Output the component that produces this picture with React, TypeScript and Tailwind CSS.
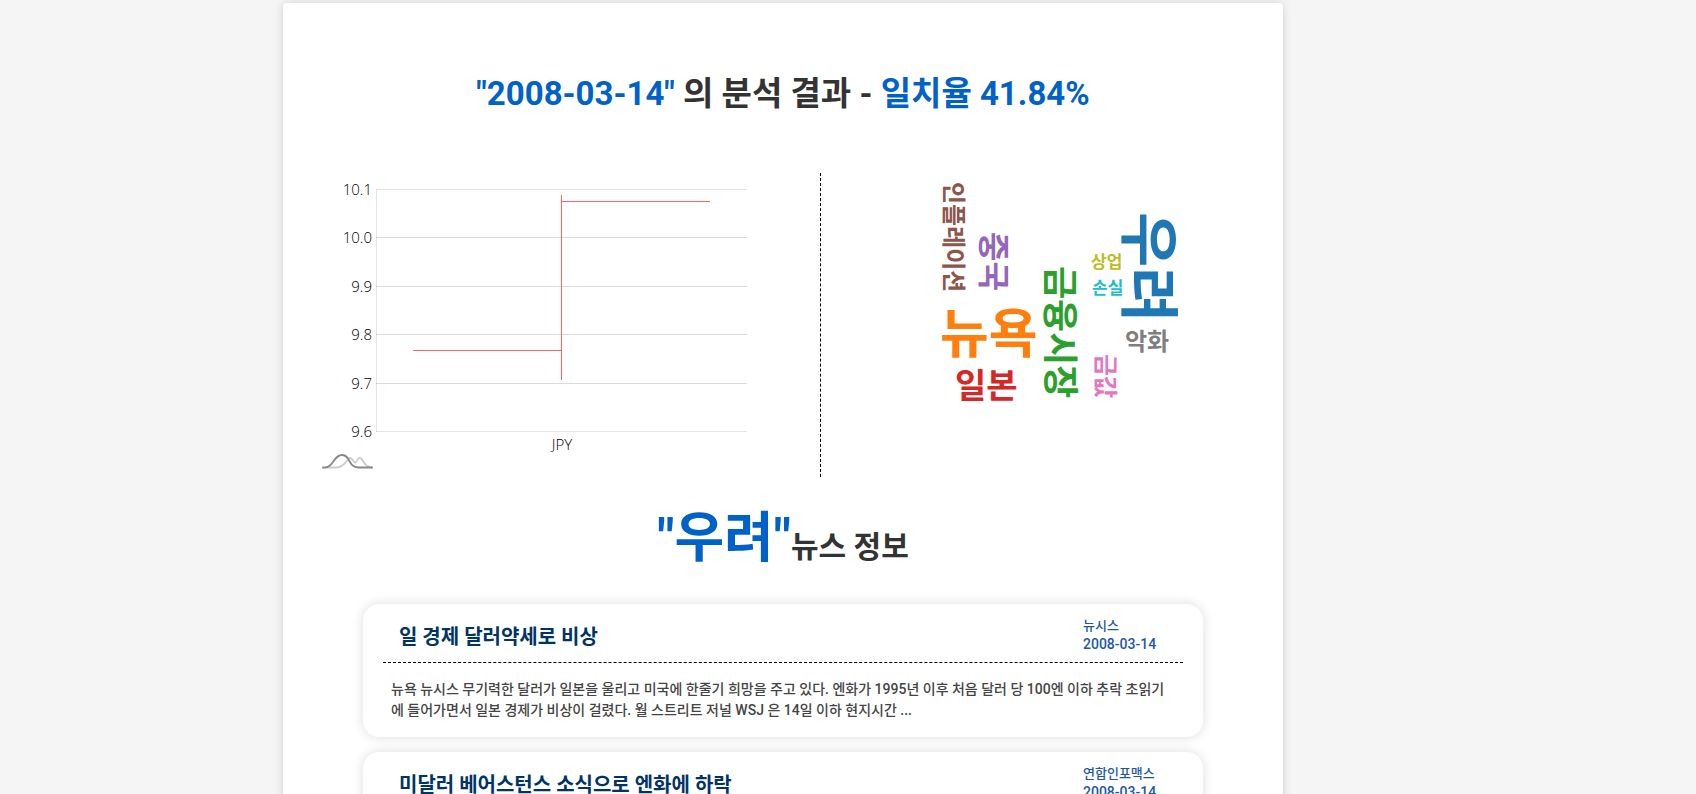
import React from "react";

interface Article {
  title: string;
  source: string;
  date: string;
  summary: string;
}

const articles: Article[] = [
  {
    title: "일 경제 달러약세로 비상",
    source: "뉴시스",
    date: "2008-03-14",
    summary:
      "뉴욕 뉴시스 무기력한 달러가 일본을 울리고 미국에 한줄기 희망을 주고 있다. 엔화가 1995년 이후 처음 달러 당 100엔 이하 추락 초읽기에 들어가면서 일본 경제가 비상이 걸렸다. 월 스트리트 저널 WSJ 은 14일 이하 현지시간 ...",
  },
  {
    title: "미달러 베어스턴스 소식으로 엔화에 하락",
    source: "연합인포맥스",
    date: "2008-03-14",
    summary: "",
  },
];

interface Word {
  text: string;
  x: number;
  y: number;
  size: number;
  color: string;
  vertical?: boolean;
}

const words: Word[] = [
  { text: "우려", x: 306, y: 39, size: 60, color: "#1f77b4", vertical: true },
  { text: "뉴욕", x: 119, y: 180, size: 53, color: "#ff7f0e" },
  { text: "금융시장", x: 226, y: 93, size: 36, color: "#2ca02c", vertical: true },
  { text: "일본", x: 134, y: 225, size: 34, color: "#d62728" },
  { text: "중국", x: 161, y: 59, size: 32, color: "#9467bd", vertical: true },
  { text: "인플레이션", x: 124, y: 9, size: 24, color: "#8c564b", vertical: true },
  { text: "금값", x: 276, y: 181, size: 24, color: "#e377c2", vertical: true },
  { text: "악화", x: 304, y: 177, size: 24, color: "#7f7f7f" },
  { text: "상업", x: 270, y: 95, size: 17, color: "#bcbd22" },
  { text: "손실", x: 271, y: 121, size: 17, color: "#17becf" },
];

const ticks = [
  { label: "10.1", y: 16 },
  { label: "10.0", y: 64 },
  { label: "9.9", y: 113 },
  { label: "9.8", y: 161 },
  { label: "9.7", y: 210 },
  { label: "9.6", y: 258 },
];

function RateChart() {
  return (
    <svg
      viewBox="0 0 517 304"
      className="block w-full font-['Open_Sans',sans-serif]"
      role="img"
      aria-label="JPY"
    >
      <g stroke="#000" shapeRendering="crispEdges">
        <path d="M73.5 16V259" strokeOpacity="0.1" />
        {ticks.map((t, i) => (
          <path
            key={t.label}
            d={`M73 ${t.y + 0.5}H444`}
            strokeOpacity={i === 0 || i === ticks.length - 1 ? 0.1 : 0.15}
          />
        ))}
      </g>
      <g className="text-[15px] font-light" fill="#000">
        {ticks.map((t) => (
          <text key={t.label} x="69" y={t.y + 6} textAnchor="end">
            {t.label}
          </text>
        ))}
        <text x="259" y="277" textAnchor="middle">
          JPY
        </text>
      </g>
      <path
        d="M110 177.5H258M258.5 22V207M258 28.5H407"
        stroke="#ff6464"
        fill="none"
        shapeRendering="crispEdges"
      />
      <g fill="none" strokeLinecap="round">
        <path
          d="M20 294.5H33C43 294.5 43.500 285 47 285C50 285 50 289.500 52 289.500C54.500 289.500 54 285 56.500 285C61 285 60 294.500 69 294.500"
          stroke="#ccc"
          strokeWidth="1.8"
        />
        <path
          d="M20 294.5C31 295.500 30 282 39 282C48 282 45 294.500 55 294.500H69"
          stroke="#888"
          strokeWidth="1.8"
        />
      </g>
    </svg>
  );
}

function WordCloud() {
  return (
    <svg viewBox="0 0 442 304" className="block w-full" role="img" aria-label="키워드">
      {words.map((w) => (
        <text
          key={w.text}
          transform={`translate(${w.x} ${w.y})${w.vertical ? " rotate(90)" : ""}`}
          fontSize={w.size}
          fontWeight="700"
          fill={w.color}
        >
          {w.text}
        </text>
      ))}
    </svg>
  );
}

function ArticleCard({ article }: { article: Article }) {
  return (
    <article className="min-h-[133px] rounded-2xl bg-white px-5 shadow-[0_0_12px_rgba(0,0,0,0.14)]">
      <header className="flex h-[59px] items-center justify-between border-b border-dashed border-black pt-1 pl-4">
        <h3 className="pt-1 text-[20px] font-bold text-[#003366]">
          <a href="#">{article.title}</a>
        </h3>
        <div className="w-[100px] text-[13px] leading-[19px] font-medium text-[#1c58a8]">
          <p>{article.source}</p>
          <p className="text-[14px]">{article.date}</p>
        </div>
      </header>
      <p className="px-2 pt-4 text-[14px] leading-[21px] font-medium break-all text-[#444]">
        {article.summary}
      </p>
    </article>
  );
}

export default function App() {
  return (
    <div className="h-screen overflow-hidden bg-[#f5f5f5] pt-[3px] font-[Roboto,'Noto_Sans_CJK_KR',sans-serif] text-[#333]">
      <main className="mx-auto min-h-full w-full max-w-[1000px] rounded bg-white px-5 pt-[67px] shadow-[0_0_10px_rgba(0,0,0,0.15)] min-[1400px]:ml-[283px]">
        <h1 className="text-center text-[33px] leading-[48px] font-bold">
          <span className="text-[#0062c8]">"2008-03-14"</span> 의 분석 결과 -{" "}
          <span className="text-[#0062c8]">일치율 41.84%</span>
        </h1>
        <section className="mt-[55px] flex">
          <div className="min-w-0 flex-[517]">
            <RateChart />
          </div>
          <div className="min-w-0 flex-[442] border-l border-dashed border-black">
            <WordCloud />
          </div>
        </section>
        <h2 className="mt-5 text-center text-[30px] leading-[84px] font-bold">
          <span className="text-[54px] text-[#0062c8]">"우려"</span>뉴스 정보
        </h2>
        <section className="mx-15 mt-[15px] flex flex-col gap-[15px]">
          {articles.map((a) => (
            <ArticleCard key={a.title} article={a} />
          ))}
        </section>
      </main>
    </div>
  );
}
